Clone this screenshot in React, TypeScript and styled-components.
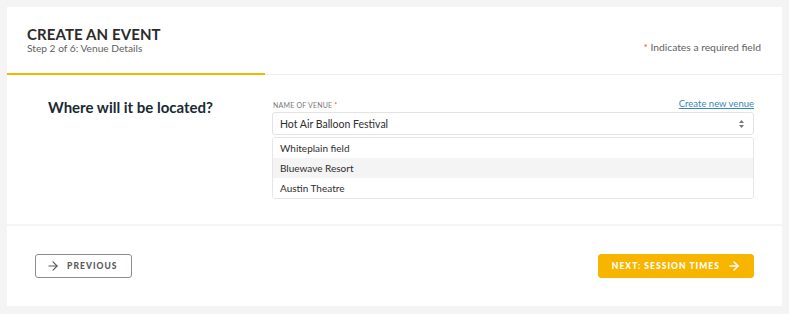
import styled, { createGlobalStyle } from 'styled-components';
import { ArrowRight } from 'lucide-react';

const GlobalStyle = createGlobalStyle`
  body{
    margin: 0;
    background-color: #f4f4f4;
    font-family: Lato, "Open Sans", sans-serif;
  }
`;

const Page = styled.div`
  width: 789px;
  padding: 7px 7px 7px 7px;
  box-sizing: border-box;
  display: flex;
  flex-direction: column;
  gap: 2px;
`;

const Card = styled.section`
  background-color: #fff;
`;

const Header = styled.header`
  display: flex;
  justify-content: space-between;
  align-items: flex-end;
  padding: 18px 21px 18px 20px;
`;

const Title = styled.h1`
  margin: 0;
  font-size: 15px;
  line-height: 18px;
  font-weight: 700;
  letter-spacing: 0.1px;
  color: #2b2b2b;
`;

const Subtitle = styled.p`
  margin: -1px 0 0;
  font-size: 10.2px;
  line-height: 13px;
  color: #5f5f5f;
`;

const RequiredNote = styled.p`
  margin: 0 0 1px;
  font-size: 10.3px;
  line-height: 13px;
  color: #5f5f5f;
`;

const Star = styled.span`
  color: #e8602a;
`;

const Progress = styled.div`
  display: flex;
  height: 2px;
`;

const ProgressFill = styled.div`
  width: 258px;
  height: 2px;
  background-color: #f7b500;
`;

const ProgressRest = styled.div`
  flex: 1;
  height: 1px;
  align-self: flex-end;
  background-color: #ececec;
`;

const Body = styled.div`
  display: flex;
  padding: 21px 28px 25px 41px;
`;

const Question = styled.h2`
  width: 224px;
  margin: 2px 0 0;
  font-size: 15px;
  line-height: 18px;
  font-weight: 700;
  color: #1a2a33;
`;

const Field = styled.div`
  flex: 1;
  display: flex;
  flex-direction: column;
`;

const LabelRow = styled.div`
  display: flex;
  justify-content: space-between;
  align-items: flex-end;
  height: 13px;
`;

const Label = styled.label`
  padding-left: 1px;
  margin-bottom: -1px;
  font-size: 7px;
  line-height: 9px;
  letter-spacing: 0.2px;
  text-transform: uppercase;
  color: #777;
`;

const Link = styled.a`
  font-size: 9.5px;
  line-height: 11px;
  color: #3b86b8;
  text-decoration: underline;
  cursor: pointer;
`;

const Select = styled.div`
  margin-top: 3px;
  height: 23px;
  padding: 0 9px 0 7px;
  display: flex;
  align-items: center;
  justify-content: space-between;
  border: 1px solid #e3e3e3;
  border-radius: 3px;
  box-sizing: border-box;
  font-size: 10.5px;
  color: #2e2e2e;
`;

const Options = styled.ul`
  margin: 2px 0 0;
  padding: 0;
  list-style: none;
  border: 1px solid #e6e6e6;
  border-radius: 3px;
  overflow: hidden;
`;

const Option = styled.li<{ $active?: boolean }>`
  height: 20px;
  padding-left: 7px;
  display: flex;
  align-items: center;
  font-size: 10px;
  color: #2e2e2e;
  background-color: ${p => (p.$active ? '#f4f4f4' : '#fff')};
`;

const Footer = styled.footer`
  height: 80px;
  padding: 0 28px;
  display: flex;
  align-items: center;
  justify-content: space-between;
  background-color: #fff;
`;

const Button = styled.button<{ $primary?: boolean }>`
  height: 24px;
  padding: ${p => (p.$primary ? '0 12px 0 13px' : '0 13px 0 10px')};
  display: flex;
  align-items: center;
  gap: 7px;
  border: 1px solid ${p => (p.$primary ? '#f7b500' : '#8d8d8d')};
  border-radius: 3px;
  background-color: ${p => (p.$primary ? '#f7b500' : '#fff')};
  color: ${p => (p.$primary ? '#fff' : '#5a5a5a')};
  font-family: Lato, sans-serif;
  font-size: 8.5px;
  font-weight: 900;
  letter-spacing: 1.05px;
  cursor: pointer;
`;

function SortIcon() {
  return (
    <svg width="5" height="8" viewBox="0 0 5 8">
      <path d="M2.5 0 L5 3 L0 3 Z M2.5 8 L5 5 L0 5 Z" fill="#777" />
    </svg>
  );
}

export default function App() {
  const venues = ['Whiteplain field', 'Bluewave Resort', 'Austin Theatre'];

  return (
    <>
      <GlobalStyle />
      <Page>
        <Card>
          <Header>
            <div>
              <Title>CREATE AN EVENT</Title>
              <Subtitle>Step 2 of 6: Venue Details</Subtitle>
            </div>
            <RequiredNote><Star>*</Star> Indicates a required field</RequiredNote>
          </Header>
          <Progress>
            <ProgressFill />
            <ProgressRest />
          </Progress>
          <Body>
            <Question>Where will it be located?</Question>
            <Field>
              <LabelRow>
                <Label>Name of venue <Star>*</Star></Label>
                <Link>Create new venue</Link>
              </LabelRow>
              <Select>
                <span>Hot Air Balloon Festival</span>
                <SortIcon />
              </Select>
              <Options>
                {venues.map((v, i) => (
                  <Option key={v} $active={i === 1}>{v}</Option>
                ))}
              </Options>
            </Field>
          </Body>
        </Card>
        <Footer>
          <Button>
            <ArrowRight size={14} strokeWidth={2} />
            PREVIOUS
          </Button>
          <Button $primary>
            NEXT: SESSION TIMES
            <ArrowRight size={14} strokeWidth={2.5} />
          </Button>
        </Footer>
      </Page>
    </>
  );
}
